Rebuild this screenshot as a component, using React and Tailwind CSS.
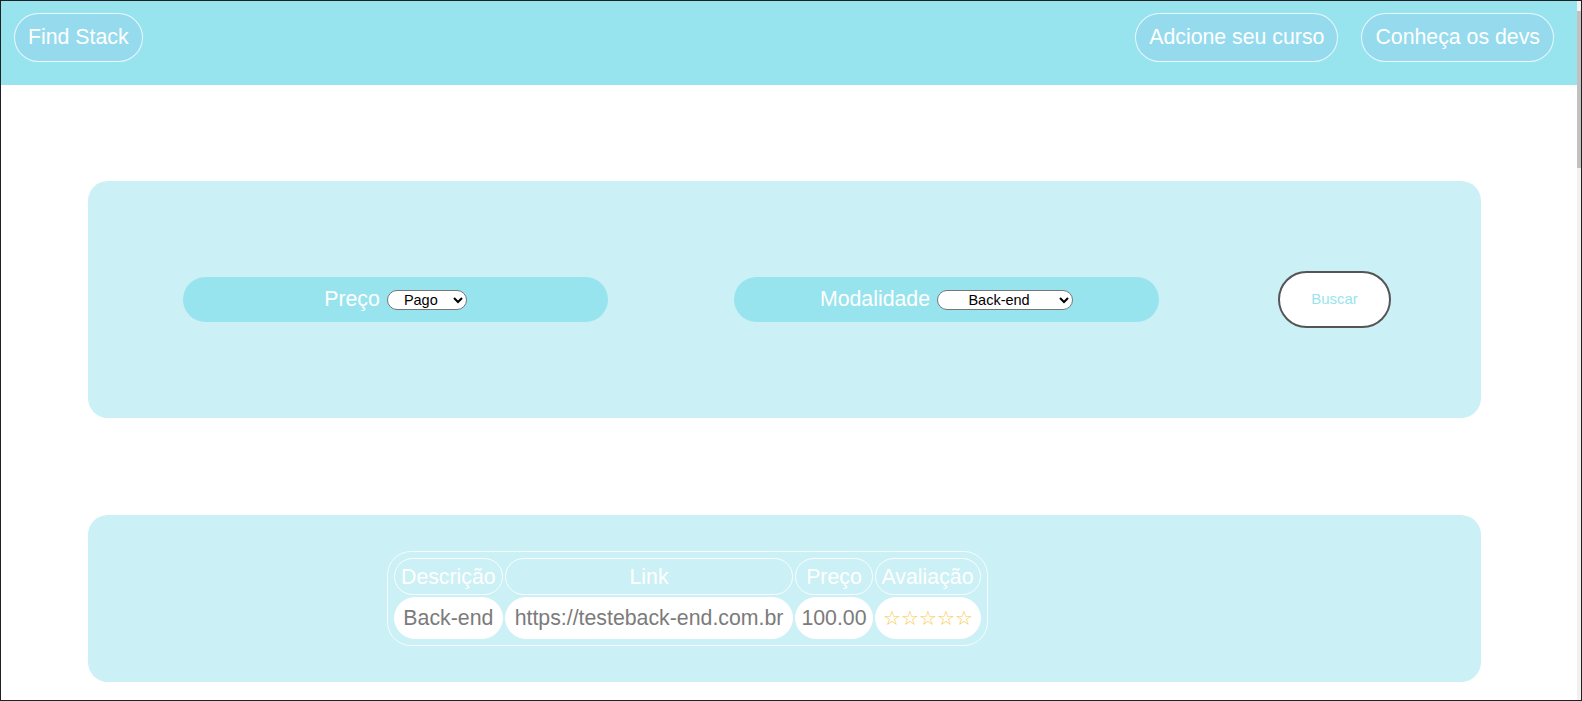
const font = { fontFamily: '"Liberation Sans", Arial, sans-serif' };

function NavButton({ children }) {
  return (
    <button className="h-[49px] rounded-full border border-white/80 bg-[#95dbed] px-[13px] text-[21.3px] leading-none text-white">
      {children}
    </button>
  );
}

function FilterPill({ label, children }) {
  return (
    <div className="flex h-[45px] w-[425px] items-center justify-center gap-[7px] rounded-full bg-[#98e4ee]">
      <span className="text-[21.3px] text-white">{label}</span>
      {children}
    </div>
  );
}

const courses = [
  {
    id: 1,
    description: "Back-end",
    link: "https://testeback-end.com.br",
    price: "100.00",
    rating: "☆☆☆☆☆",
  },
];

export default function App() {
  return (
    <div
      className="flex h-[701px] w-[1582px] overflow-hidden border border-[#202124] bg-white"
      style={font}
    >
      <div className="flex min-w-0 flex-1 flex-col">
        <header className="flex h-[84px] shrink-0 items-start justify-between bg-[#98e4ee] px-[13px] pt-3">
          <NavButton>Find Stack</NavButton>
          <div className="flex gap-[23px] pr-[10px]">
            <NavButton>Adcione seu curso</NavButton>
            <NavButton>Conheça os devs</NavButton>
          </div>
        </header>

        <main className="flex flex-col pl-[87px] pr-[96px]">
          <section className="mt-[96px] flex h-[237px] items-center rounded-[20px] bg-[#cbf0f5] pl-[95px]">
            <FilterPill label="Preço">
              <select className="h-[20px] w-[80px] rounded-full border border-[#767676] bg-white text-center text-[14.5px] text-black">
                <option>Pago</option>
                <option>Gratuito</option>
              </select>
            </FilterPill>
            <div className="ml-[126px]">
              <FilterPill label="Modalidade">
                <select className="h-[20px] w-[136px] rounded-full border border-[#767676] bg-white text-center text-[14.5px] text-black">
                  <option>Back-end</option>
                  <option>Front-end</option>
                </select>
              </FilterPill>
            </div>
            <button className="ml-[119px] h-[57px] w-[113px] rounded-full border-2 border-[#555] bg-white text-[15px] text-[#98e4ee]">
              Buscar
            </button>
          </section>

          <section className="mt-[97px] flex h-[167px] items-center rounded-[20px] bg-[#cbf0f5] pl-[299px]">
            <div className="rounded-[24px] border border-white/80 p-1">
              <table className="border-separate border-spacing-x-[2.5px] border-spacing-y-[2.5px] text-[21.3px] leading-[24px]">
                <thead>
                  <tr>
                    {["Descrição", "Link", "Preço", "Avaliação"].map((h) => (
                      <th
                        key={h}
                        className="rounded-full border border-white/90 px-[6px] py-[5.5px] font-normal text-white"
                      >
                        {h}
                      </th>
                    ))}
                  </tr>
                </thead>
                <tbody>
                  {courses.map((c) => (
                    <tr key={c.id}>
                      <td className="rounded-full border border-white bg-white px-[6px] py-[8px] text-center text-[#7b7b7b]">
                        {c.description}
                      </td>
                      <td className="rounded-full border border-white bg-white px-[9px] py-[8px] text-center text-[#7b7b7b]">
                        {c.link}
                      </td>
                      <td className="rounded-full border border-white bg-white px-[5px] py-[8px] text-center text-[#7b7b7b]">
                        {c.price}
                      </td>
                      <td className="rounded-full border border-white bg-white px-[6px] py-[8px] text-center text-[20px] text-[#f7cd4e]">
                        {c.rating}
                      </td>
                    </tr>
                  ))}
                </tbody>
              </table>
            </div>
          </section>
        </main>
      </div>

      <div className="flex w-[4px] shrink-0 flex-col bg-[#f1f1f1] pt-[10px]">
        <div className="h-[157px] w-full bg-[#c1c1c1]" />
      </div>
    </div>
  );
}
